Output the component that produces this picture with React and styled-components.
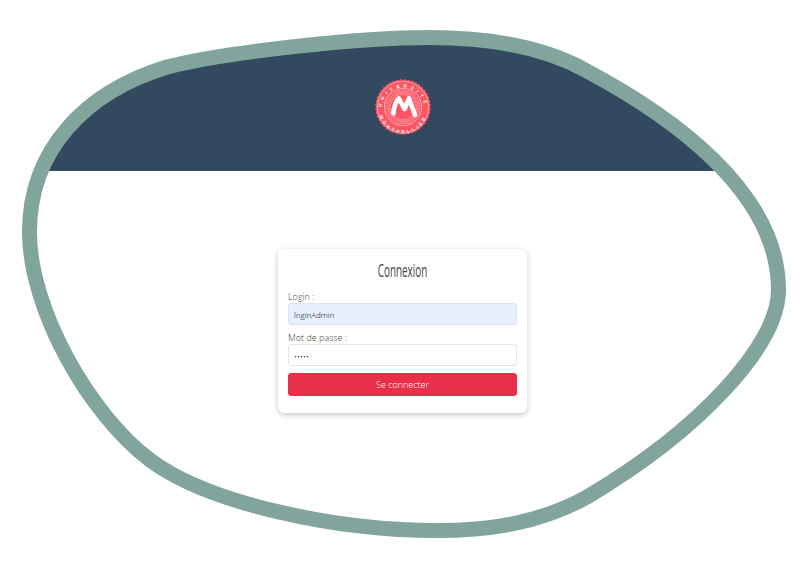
import React from 'react'
import styled, { createGlobalStyle } from 'styled-components'

// centre line of the blob outline
const blobPath = `
    M430 37.5
    C490 37.5 545 48 585 70
    C668 114 778.5 190 778.5 290
    C778.5 345 700 430 587 497
    C540 523 490 530.5 437 530.5
    C340 530.5 210 505 150 460
    C90 415 29.5 310 29.5 232
    C29.5 150 85 92 167 67
    C225 52 360 37.5 430 37.5
    Z
`

// scalloped edge of the seal
const sealEdge = Array.from({ length: 88 }, (_, i) => {
    const r = i % 2 ? 28 : 26.8
    const a = (i / 88) * Math.PI * 2
    return `${(29 + r * Math.cos(a)).toFixed(2)},${(29 + r * Math.sin(a)).toFixed(2)}`
}).join(' ')

const rays = Array.from({ length: 60 }, (_, i) => (i / 60) * Math.PI * 2)

const GlobalStyle = createGlobalStyle`
    html, body {
        margin: 0;
        padding: 0;
        background: #fff;
        font-family: "Open Sans", "Liberation Sans", sans-serif;
    }
`

const Page = styled.div`
    position: relative;
    width: 808px;
    height: 567px;
    overflow: hidden;
`

const Backdrop = styled.svg`
    position: absolute;
    top: 0;
    left: 0;
`

const Header = styled.header`
    position: relative;
    height: 171px;
    display: flex;
    justify-content: center;
    padding: 78px 2px 0 0;
    box-sizing: border-box;
`

const Main = styled.main`
    position: relative;
    display: flex;
    justify-content: center;
    padding: 78px 3px 0 0;
`

const Card = styled.form`
    width: 249px;
    height: 164px;
    box-sizing: border-box;
    padding: 11px 10px 0;
    background: #fff;
    border-radius: 6px;
    box-shadow: 0 2px 6px rgba(0, 0, 0, 0.22);
`

const Title = styled.h1`
    margin: 0 0 11px;
    height: 20px;
    font-family: "Open Sans", sans-serif;
    font-size: 19px;
    line-height: 20px;
    font-weight: 400;
    color: #444;
    text-align: center;
    transform: scaleX(0.52);
`

const Label = styled.label`
    display: block;
    height: 12px;
    font-size: 9px;
    line-height: 12px;
    font-weight: 300;
    color: #444;
`

const Field = styled.input`
    display: block;
    width: 100%;
    height: 22px;
    margin: 0 0 7px;
    padding: 0 5px;
    box-sizing: border-box;
    border: 1px solid ${(p) => (p.$filled ? '#dbe3f0' : '#e6e6e6')};
    border-radius: 3px;
    background: ${(p) => (p.$filled ? '#e8f0fe' : '#fff')};
    font-family: "Open Sans", sans-serif;
    font-size: 8px;
    font-weight: 300;
    color: #000;
    outline: none;
`

const Submit = styled.button`
    display: block;
    width: 100%;
    height: 23px;
    margin-top: 7px;
    padding: 0;
    border: 1px solid #e92a45;
    border-radius: 3px;
    background: #e9304a;
    font-family: "Open Sans", sans-serif;
    font-size: 9px;
    font-weight: 300;
    color: #fff;
`

const SealText = styled.text`
    font-family: "Liberation Sans", sans-serif;
    font-size: 4.6px;
    font-weight: 700;
    fill: #fff;
`

const Seal = () => (
    <svg width="58" height="58" viewBox="0 0 58 58">
        <defs>
            <path id="sealTop" d="M7.500 31a21.500 21.500 0 0 1 43 0" />
            <path id="sealBottom" d="M4.500 31a24.500 24.500 0 0 0 49 0" />
        </defs>
        <polygon points={sealEdge} fill="#fb5463" />
        <circle cx="29" cy="29" r="25.600" fill="none" stroke="#fff" strokeWidth="0.5" opacity="0.8" />
        <circle cx="29" cy="29" r="18.600" fill="none" stroke="#fff" strokeWidth="0.6" opacity="0.8" />
        {rays.map((a, i) => (
            <line
                key={i}
                x1={29 + 12 * Math.cos(a)}
                y1={29 + 12 * Math.sin(a)}
                x2={29 + 17.5 * Math.cos(a)}
                y2={29 + 17.5 * Math.sin(a)}
                stroke="#fff"
                strokeWidth="0.45"
                opacity="0.7"
            />
        ))}
        <SealText>
            <textPath href="#sealTop" startOffset="50%" textAnchor="middle" letterSpacing="3.600">UNIVERSITÉ</textPath>
        </SealText>
        <SealText>
            <textPath href="#sealBottom" startOffset="50%" textAnchor="middle" letterSpacing="2.700">MONTPELLIER</textPath>
        </SealText>
        <path
            d="M19.500 35.500C19.500 30 22 22.500 25 20.500L30.500 31L35 20.500L41 37"
            fill="none"
            stroke="#fff"
            strokeWidth="4.600"
            strokeLinecap="round"
            strokeLinejoin="round"
        />
    </svg>
)

const App = () => {
    return (
        <Page>
            <GlobalStyle />
            <Backdrop width="808" height="567" viewBox="0 0 808 567">
                <defs>
                    <clipPath id="blobClip">
                        <path d={blobPath} />
                    </clipPath>
                </defs>
                <rect x="0" y="0" width="808" height="171" fill="#33495f" clipPath="url(#blobClip)" />
                <path d={blobPath} fill="none" stroke="#81a59c" strokeWidth="15" />
            </Backdrop>
            <Header>
                <Seal />
            </Header>
            <Main>
                <Card onSubmit={(e) => e.preventDefault()}>
                    <Title>Connexion</Title>
                    <Label htmlFor="login">Login :</Label>
                    <Field id="login" $filled type="text" defaultValue="loginAdmin" />
                    <Label htmlFor="password">Mot de passe :</Label>
                    <Field id="password" type="password" defaultValue="admin" />
                    <Submit type="submit">Se connecter</Submit>
                </Card>
            </Main>
        </Page>
    )
}

export default App
